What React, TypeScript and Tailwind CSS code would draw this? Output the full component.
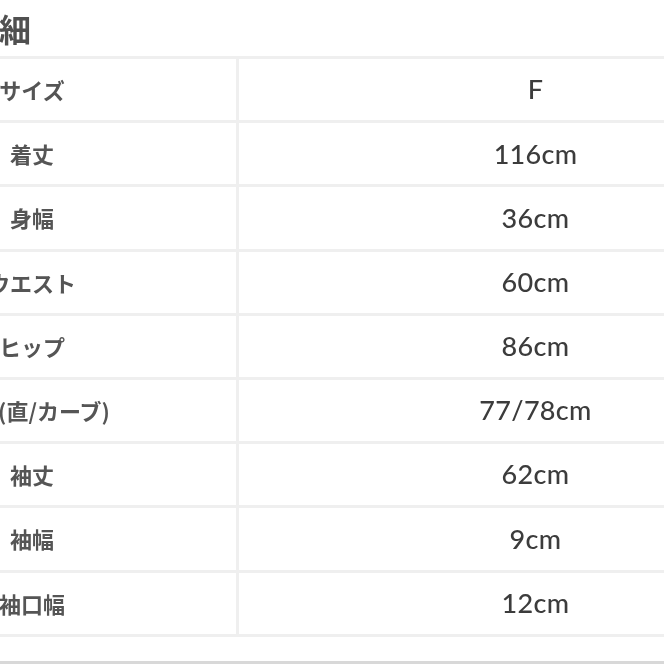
import React from "react";

const rows: [string, string][] = [
  ["サイズ", "F"],
  ["着丈", "116cm"],
  ["身幅", "36cm"],
  ["ウエスト", "60cm"],
  ["ヒップ", "86cm"],
  ["裄丈(直/カーブ)", "77/78cm"],
  ["袖丈", "62cm"],
  ["袖幅", "9cm"],
  ["袖口幅", "12cm"],
];

export default function App() {
  return (
    <div className="w-[664px] h-[664px] overflow-hidden bg-white flex flex-col">
      <div className="ml-[-172px] w-[1004px] shrink-0 blur-[0.7px]">
        <div
          className="h-[56px] flex items-center pl-[139px] text-[32px] font-bold text-[#505050] leading-none"
          style={{ fontFamily: '"Noto Sans CJK JP", "Noto Sans", sans-serif' }}
        >
          詳細
        </div>
        <div className="border-t-[3px] border-[#efefef]">
          {rows.map(([label, value]) => (
            <div
              key={label}
              className="grid grid-cols-[411px_1fr] h-[64.2px] border-b-[3px] border-[#efefef]"
            >
              <div
                className="flex items-center justify-center border-r-[3px] border-[#efefef] text-[22px] font-bold text-[#555555] whitespace-nowrap"
                style={{ fontFamily: '"Noto Sans CJK JP", "Noto Sans", sans-serif' }}
              >
                {label}
              </div>
              <div
                className="flex items-center justify-center text-[27px] font-medium text-[#3c3c3c] tracking-[0.3px]"
                style={{ fontFamily: 'Lato, "Noto Sans", sans-serif' }}
              >
                {value}
              </div>
            </div>
          ))}
        </div>
      </div>
      <div className="flex-1" />
      <div className="h-[3px] bg-[#d8d8d8] shrink-0" />
    </div>
  );
}
